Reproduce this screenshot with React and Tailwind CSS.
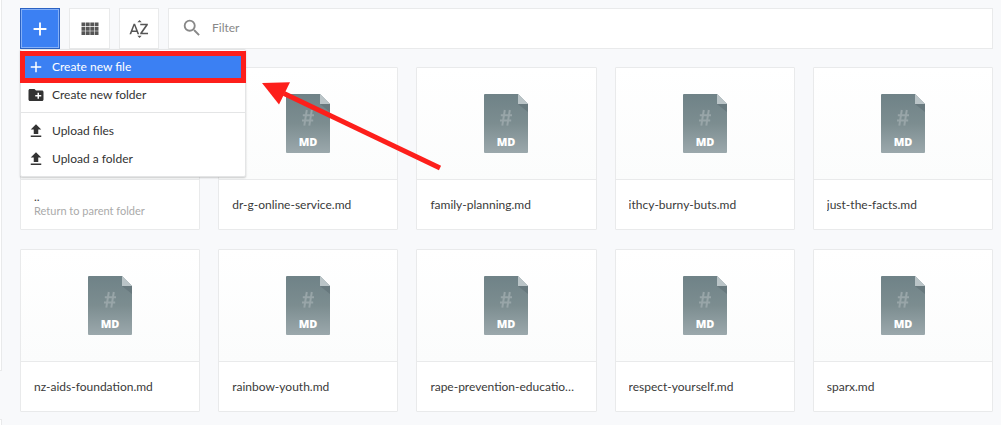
import React from 'react';
import {
  MdAdd,
  MdSortByAlpha,
  MdSearch,
  MdCreateNewFolder,
} from 'react-icons/md';

const files = [
  'dr-g-online-service.md',
  'family-planning.md',
  'ithcy-burny-buts.md',
  'just-the-facts.md',
  'nz-aids-foundation.md',
  'rainbow-youth.md',
  'rape-prevention-education.md',
  'respect-yourself.md',
  'sparx.md',
];

function GridIcon() {
  return (
    <svg width="18" height="14" viewBox="0 0 18 14" fill="currentColor" aria-hidden="true">
      <path d="M0.500 0.500h3.800v3.800H0.500zM4.900 0.500h3.800v3.800h-3.800zM9.300 0.500h3.800v3.800h-3.800zM13.700 0.500h3.800v3.800h-3.800zM0.500 4.900h3.800v3.800H0.500zM4.900 4.900h3.800v3.800h-3.800zM9.300 4.900h3.800v3.800h-3.800zM13.700 4.900h3.800v3.800h-3.800zM0.500 9.300h3.800v3.800H0.500zM4.900 9.300h3.800v3.800h-3.800zM9.300 9.300h3.800v3.800h-3.800zM13.700 9.300h3.800v3.800h-3.800z" />
    </svg>
  );
}

function UploadIcon({ size }) {
  return (
    <svg width={size} height={size} viewBox="0 0 24 24" fill="currentColor" aria-hidden="true">
      <path d="M9 16h6v-6h4l-7-7-7 7h4zM5 18h14v2H5z" />
    </svg>
  );
}

function MarkdownIcon() {
  return (
    <svg width="44" height="59" viewBox="0 0 44 59" aria-hidden="true">
      <defs>
        <linearGradient id="sheet" x1="0" y1="0" x2="0" y2="1">
          <stop offset="0" stopColor="#6f8287" />
          <stop offset="0.5" stopColor="#7c8d90" />
          <stop offset="1" stopColor="#9ba8ac" />
        </linearGradient>
      </defs>
      <path d="M1 0H34L44 10V58a1 1 0 0 1-1 1H1a1 1 0 0 1-1-1V1a1 1 0 0 1 1-1z" fill="url(#sheet)" />
      <path d="M34 10H44V18z" fill="#68797e" />
      <path d="M34 0L44 10H34z" fill="#bac4c7" />
      <path
        d="M20.800 16L18.300 31.700M25.800 16L23.300 31.700M16.800 21.300H28M16 26.500H27.200"
        stroke="#98a5a8"
        strokeWidth="2"
        fill="none"
      />
      <text
        x="22"
        y="52"
        textAnchor="middle"
        fill="#fff"
        className="font-['Open_Sans',sans-serif] text-[11px] font-extrabold"
      >
        MD
      </text>
    </svg>
  );
}

function Card({ children, preview }) {
  return (
    <li className="flex h-[163px] min-w-0 flex-col rounded-[1px] border border-[#e9eaeb] bg-white">
      <div className="flex h-[112px] shrink-0 items-center justify-center border-b border-[#e9eaeb] bg-linear-to-b from-white to-[#fbfcfc]">
        {preview}
      </div>
      <div className="flex min-w-0 flex-1 flex-col justify-center pr-[18px] pl-[13px]">{children}</div>
    </li>
  );
}

function MenuItem({ icon: Icon, children, active, outlined }) {
  return (
    <button
      type="button"
      role="menuitem"
      className={
        'relative flex h-7 w-full items-center gap-[7px] pl-1.5 text-left ' +
        (active ? 'bg-[#3b80f3] text-white' : 'text-[#333]')
      }
    >
      <Icon size={18} />
      <span>{children}</span>
      {outlined && (
        <span className="pointer-events-none absolute -inset-x-px -inset-y-0.5 border-[5px] border-[#fd1f1b]" />
      )}
    </button>
  );
}

export default function App() {
  return (
    <div className="flex min-h-screen bg-[#f8f9fb] font-['Lato','Liberation_Sans',sans-serif] text-[12px] leading-4 text-[#3a3a3a]">
      <aside className="flex w-0.5 shrink-0 flex-col gap-12">
        <div className="h-[371px] border-r border-b border-[#e9eaeb] bg-white" />
        <div className="flex-1 border-t border-r border-[#e9eaeb] bg-white" />
      </aside>

      <main className="relative min-w-0 flex-1 pt-2 pr-2 pl-[18px]">
        <div className="flex gap-[9px]">
          <div className="relative">
            <button
              type="button"
              aria-label="Add"
              aria-expanded="true"
              className="flex h-[41px] w-10 items-center justify-center border border-[#2b62c2] bg-[#3b80f3] text-white inset-ring inset-ring-[#84b0f8]"
            >
              <MdAdd size={22} />
            </button>
            <div
              role="menu"
              className="absolute top-[41px] left-0 z-10 w-[226px] rounded-[2px] border border-[#e4e5e6] bg-white py-[3px] shadow-[0_1px_2px_rgba(0,0,0,0.2)]"
            >
              <MenuItem icon={MdAdd} active outlined>
                Create new file
              </MenuItem>
              <MenuItem icon={MdCreateNewFolder}>Create new folder</MenuItem>
              <hr className="mt-[3px] mb-1 border-[#e4e5e6]" />
              <MenuItem icon={UploadIcon}>Upload files</MenuItem>
              <MenuItem icon={UploadIcon}>Upload a folder</MenuItem>
            </div>
          </div>
          <button
            type="button"
            aria-label="Grid view"
            className="flex h-[41px] w-[41px] items-center justify-center border border-[#e9eaeb] bg-white text-[#555]"
          >
            <GridIcon />
          </button>
          <button
            type="button"
            aria-label="Sort by name"
            className="flex h-[41px] w-10 items-center justify-center border border-[#e9eaeb] bg-white text-[#555]"
          >
            <MdSortByAlpha size={22} />
          </button>
          <label className="flex h-[41px] min-w-0 flex-1 items-center gap-[9px] border border-[#e9eaeb] bg-white pb-0.5 pl-3 text-[#888]">
            <MdSearch size={22} className="shrink-0" />
            <input
              type="text"
              aria-label="Filter"
              placeholder="Filter"
              className="min-w-0 flex-1 bg-transparent text-[#333] outline-none placeholder:text-[#888]"
            />
          </label>
        </div>

        <ul className="mt-[18px] grid grid-cols-5 gap-x-[18px] gap-y-[19px]">
          <Card>
            <span className="leading-3">..</span>
            <span className="text-[11px] text-[#aaa]">Return to parent folder</span>
          </Card>
          {files.map((name) => (
            <Card key={name} preview={<MarkdownIcon />}>
              <span className="truncate">{name}</span>
            </Card>
          ))}
        </ul>

        <svg
          className="pointer-events-none absolute top-20 left-[258px] z-20"
          width="184"
          height="92"
          viewBox="260 80 184 92"
          aria-hidden="true"
        >
          <path d="M284 93.500L440 168" stroke="#fd1f1b" strokeWidth="5" />
          <path d="M262 83L290 82.300L279 104.500z" fill="#fd1f1b" />
        </svg>
      </main>
    </div>
  );
}
